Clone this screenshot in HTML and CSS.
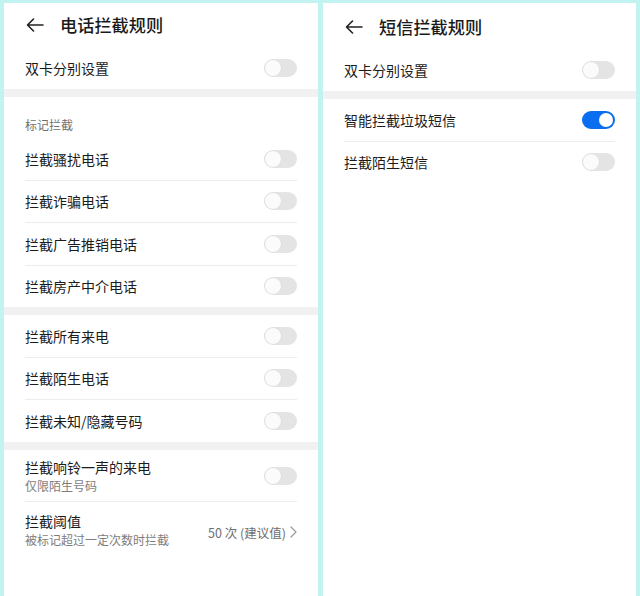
FILE: index.html
```html
<!DOCTYPE html>
<html lang="zh-CN">
<head>
<meta charset="utf-8">
<title>拦截规则</title>
<link rel="stylesheet" href="styles.css">
</head>
<body>
<div class="screen">
  <section class="panel">
    <header class="header">
      <svg class="back" width="18" height="14" viewBox="0 0 18 14"><path d="M17 7H1.5M7.5 1L1.5 7l6 6" fill="none" stroke="#222" stroke-width="1.6" stroke-linecap="round" stroke-linejoin="round"/></svg>
      <h1 class="title">电话拦截规则</h1>
    </header>
    <div class="group">
      <div class="row"><span class="label">双卡分别设置</span><span class="switch"></span></div>
    </div>
    <div class="band"></div>
    <div class="group">
      <div class="caption">标记拦截</div>
      <div class="row divided"><span class="label">拦截骚扰电话</span><span class="switch"></span></div>
      <div class="row divided"><span class="label">拦截诈骗电话</span><span class="switch"></span></div>
      <div class="row divided"><span class="label">拦截广告推销电话</span><span class="switch"></span></div>
      <div class="row"><span class="label">拦截房产中介电话</span><span class="switch"></span></div>
    </div>
    <div class="band"></div>
    <div class="group">
      <div class="row divided"><span class="label">拦截所有来电</span><span class="switch"></span></div>
      <div class="row divided"><span class="label">拦截陌生电话</span><span class="switch"></span></div>
      <div class="row"><span class="label">拦截未知/隐藏号码</span><span class="switch"></span></div>
    </div>
    <div class="band"></div>
    <div class="group">
      <div class="row row-two divided">
        <div class="texts"><span class="label">拦截响铃一声的来电</span><span class="sub">仅限陌生号码</span></div>
        <span class="switch"></span>
      </div>
      <div class="row row-two row-value">
        <div class="texts"><span class="label">拦截阈值</span><span class="sub">被标记超过一定次数时拦截</span></div>
        <span class="value">50 次 (建议值)<svg class="chev" width="7" height="12" viewBox="0 0 7 12"><path d="M1 1l5 5-5 5" fill="none" stroke="#9a9a9a" stroke-width="1.2" stroke-linecap="round" stroke-linejoin="round"/></svg></span>
      </div>
    </div>
  </section>

  <section class="panel panel-sms">
    <header class="header">
      <svg class="back" width="18" height="14" viewBox="0 0 18 14"><path d="M17 7H1.5M7.5 1L1.5 7l6 6" fill="none" stroke="#222" stroke-width="1.6" stroke-linecap="round" stroke-linejoin="round"/></svg>
      <h1 class="title">短信拦截规则</h1>
    </header>
    <div class="group">
      <div class="row"><span class="label">双卡分别设置</span><span class="switch"></span></div>
    </div>
    <div class="band"></div>
    <div class="group">
      <div class="row divided"><span class="label">智能拦截垃圾短信</span><span class="switch on"></span></div>
      <div class="row"><span class="label">拦截陌生短信</span><span class="switch"></span></div>
    </div>
  </section>
</div>
</body>
</html>
```
FILE: styles.css
```css
* { box-sizing: border-box; }
html, body { margin: 0; padding: 0; }
body {
  width: 640px;
  height: 596px;
  overflow: hidden;
  background: #c2f3f1;
  font-family: "Noto Sans CJK SC", "Noto Sans", sans-serif;
  color: #1c1c1c;
}
.screen {
  display: grid;
  grid-template-columns: 314px 313px;
  column-gap: 5px;
  padding: 3px 4px 0 4px;
  height: 596px;
}
.panel {
  background: #ffffff;
  display: flex;
  flex-direction: column;
}
.panel-sms { padding-top: 2px; }
.header {
  height: 44px;
  display: flex;
  align-items: center;
  padding-left: 22px;
  gap: 16px;
}
.back { display: block; flex: none; }
.title {
  margin: 0;
  font-size: 17.2px;
  font-weight: 500;
  color: #1a1a1a;
  line-height: 24px;
}
.group { padding: 0 21px; }
.band { height: 8px; background: #f1f1f1; }
.caption {
  font-size: 12px;
  line-height: 17px;
  color: #6f6f6f;
  padding: 19px 0 5px;
}
.row {
  height: 41.5px;
  display: flex;
  align-items: center;
  justify-content: space-between;
}
.group:first-of-type .row { height: 42px; }
.row.divided { height: 42.5px; border-bottom: 1px solid #ececec; }
.label { font-size: 14px; line-height: 20px; color: #1c1c1c; }
.row-two { height: auto; }
.row-two.divided { height: 52.5px; border-bottom: 1px solid #ececec; padding-top: 1px; }
.row-value { height: 56px; padding-top: 0; }
.texts { display: flex; flex-direction: column; }
.sub { font-size: 12px; line-height: 18px; color: #7d7d7d; }
.value {
  display: flex;
  align-items: center;
  gap: 4px;
  font-size: 12.5px;
  color: #6e6e6e;
  padding-top: 4px;
}
.chev { display: block; margin-left: 0; }
.switch {
  position: relative;
  flex: none;
  width: 33px;
  height: 18px;
  border-radius: 9px;
  background: #e4e4e4;
}
.switch::after {
  content: "";
  position: absolute;
  top: 1px;
  left: 1px;
  width: 16px;
  height: 16px;
  border-radius: 50%;
  background: #fbfbfb;
  box-shadow: 0 0 0 0.5px #d8d8d8;
}
.switch.on { background: #0a6ef0; }
.switch.on::after {
  top: 2px;
  left: auto;
  right: 2px;
  width: 14px;
  height: 14px;
  box-shadow: none;
  background: #ffffff;
}
```
